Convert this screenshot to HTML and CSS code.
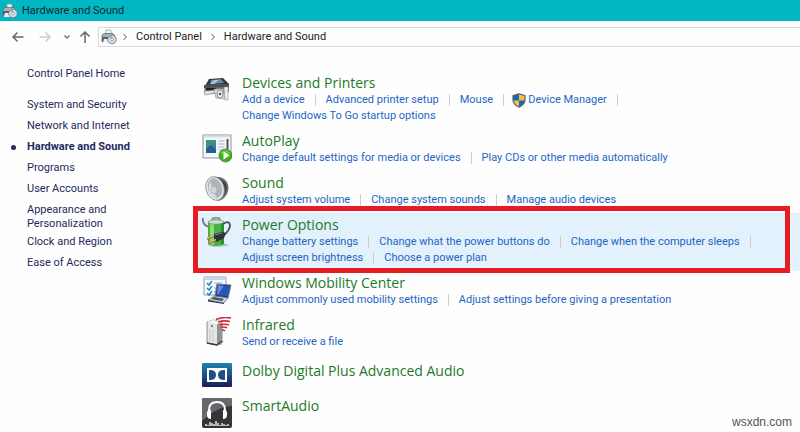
FILE: index.html
```html
<!DOCTYPE html>
<html lang="en">
<head>
  <meta charset="UTF-8">
  <title>Hardware and Sound</title>
  <link rel="stylesheet" href="styles.css">
</head>
<body>

  <!-- shared icon -->
  <svg class="defs" aria-hidden="true">
    <symbol id="hw-icon" viewBox="0 0 16 16">
      <path d="M5 1h5v5H5z" fill="#f4f8fa" stroke="#8b979e" stroke-width=".7"/>
      <path d="M1 6l2-1.500h9L14 7v6H1z" fill="#aab1b6" stroke="#596269" stroke-width=".7"/>
      <path d="M1 8h8v4H1z" fill="#596168"/>
      <path d="M3 10h5v4H2z" fill="#eef2f4"/>
      <circle cx="11" cy="10.500" r="4.300" fill="#d5dee4" stroke="#647683" stroke-width=".8"/>
      <path d="M11 10.500L8.500 7.500 11 6.500z" fill="#7fb5d6"/>
      <circle cx="11" cy="10.500" r="1.400" fill="#fff" stroke="#718693" stroke-width=".7"/>
    </symbol>
  </svg>

  <header class="title-bar">
    <svg class="small-icon"><use href="#hw-icon"/></svg>
    <h1>Hardware and Sound</h1>
  </header>

  <div class="toolbar">
    <button class="nav-button" aria-label="Back">
      <svg viewBox="0 0 12 12"><path d="M11.500 6H1M5.500 1.500L1 6l4.500 4.500"/></svg>
    </button>
    <button class="nav-button forward" aria-label="Forward" disabled>
      <svg viewBox="0 0 12 12"><path d="M.5 6H11M6.500 1.500L11 6l-4.500 4.500"/></svg>
    </button>
    <button class="nav-button recent" aria-label="Recent locations">
      <svg viewBox="0 0 12 12"><path d="M3.500 4.500L6 7l2.500-2.500"/></svg>
    </button>
    <button class="nav-button up" aria-label="Up">
      <svg viewBox="0 0 12 12"><path d="M6 12V1M1.500 5.500L6 1l4.500 4.500"/></svg>
    </button>
    <nav class="address" aria-label="Address">
      <svg class="small-icon"><use href="#hw-icon"/></svg>
      <svg class="chevron" viewBox="0 0 6 8"><path d="M1.500 1l3 3-3 3"/></svg>
      <a href="#">Control Panel</a>
      <svg class="chevron" viewBox="0 0 6 8"><path d="M1.500 1l3 3-3 3"/></svg>
      <a href="#">Hardware and Sound</a>
    </nav>
  </div>

  <div class="page">
    <nav class="sidebar">
      <a class="home" href="#">Control Panel Home</a>
      <ul>
        <li><a href="#">System and Security</a></li>
        <li><a href="#">Network and Internet</a></li>
        <li class="current"><a href="#">Hardware and Sound</a></li>
        <li><a href="#">Programs</a></li>
        <li><a href="#">User Accounts</a></li>
        <li class="two-line"><a href="#">Appearance and Personalization</a></li>
        <li><a href="#">Clock and Region</a></li>
        <li><a href="#">Ease of Access</a></li>
      </ul>
    </nav>

    <main class="categories">
      <section class="category">
        <svg class="icon" viewBox="0 0 30 30">
          <path d="M7 4l14-1 6 6-2 2H3z" fill="#30363a"/>
          <path d="M9 5l10-1 3 4-14 1z" fill="#678da5"/>
          <path d="M12 5l5 0-5 4H8z" fill="#a9c6d6"/>
          <path d="M2 10l25-1v8l-4 2H3z" fill="#777d80"/>
          <path d="M2 10l25-1v3L2 13z" fill="#4a4f52"/>
          <path d="M4 13h10v3H4z" fill="#202427"/>
          <path d="M2 16l12-1v3L3 20z" fill="#dfe2e3" stroke="#777" stroke-width=".6"/>
          <path d="M12 14h9l2 10-9-1z" fill="#d8dadb" stroke="#888" stroke-width=".6"/>
          <ellipse cx="18" cy="19" rx="3" ry="4" fill="#f4f4f4" stroke="#777" stroke-width=".8"/>
          <circle cx="18" cy="19" r="1.300" fill="#555"/>
          <path d="M22 12h4v13h-3z" fill="#eceded" stroke="#999" stroke-width=".6"/>
        </svg>
        <div class="details">
          <h2><a href="#">Devices and Printers</a></h2>
          <ul class="tasks">
            <li class="divided"><a href="#">Add a device</a></li>
            <li class="divided"><a href="#">Advanced printer setup</a></li>
            <li class="divided"><a href="#">Mouse</a></li>
            <li class="divided">
              <svg class="shield" viewBox="0 0 14 15">
                <path d="M7 .8l6 2v4q0 4.500-6 7.500-6-3-6-7.500v-4z" fill="#f6c142"/>
                <path d="M7 .8v6.700H1V2.800zM7 7.500h6q-.5 4-6 6.800z" fill="#1767b7"/>
                <path d="M7 .8l6 2v4q0 4.500-6 7.500-6-3-6-7.500v-4z" fill="none" stroke="#56616b" stroke-width="1.200"/>
              </svg>
              <a href="#">Device Manager</a>
            </li>
            <li><a href="#">Change Windows To Go startup options</a></li>
          </ul>
        </div>
      </section>

      <section class="category">
        <svg class="icon" viewBox="0 0 30 30">
          <path d="M1 2h28v23H1z" fill="#f5f6f7" stroke="#8c9498"/>
          <path d="M2 2.500h26v2H2z" fill="#d9dfe2"/>
          <path d="M4 7h10v13H4z" fill="#3c7db0"/>
          <path d="M4 7h10v4L4 15z" fill="#3f9281"/>
          <path d="M4 16l5-4 5 5v3H4z" fill="#255d93"/>
          <path d="M16.500 8h6M16.500 11h6M16.500 14h6M16.500 17h4" stroke="#a7b4ba"/>
          <path d="M25.500 6v10" stroke="#4a5358" stroke-width="2"/>
          <circle cx="23.500" cy="22.500" r="6.500" fill="#44ad22" stroke="#268710" stroke-width=".7"/>
          <path d="M18 20q5-6 11 0-4 3-11 0z" fill="#78d450" opacity=".7"/>
          <path d="M21.500 18.500l6 4-6 4z" fill="#fff"/>
        </svg>
        <div class="details">
          <h2><a href="#">AutoPlay</a></h2>
          <ul class="tasks">
            <li class="divided"><a href="#">Change default settings for media or devices</a></li>
            <li><a href="#">Play CDs or other media automatically</a></li>
          </ul>
        </div>
      </section>

      <section class="category">
        <svg class="icon" viewBox="0 0 30 30">
          <path d="M11 2q10-1 14 5 3 6 0 12-4 7-10 7z" fill="#666d71"/>
          <path d="M18 4q9 4 6 12-2 7-8 9z" fill="#3a3f42"/>
          <ellipse cx="13" cy="13.500" rx="9" ry="12" transform="rotate(-17 13 13.500)" fill="#e4e6e8" stroke="#8a9195" stroke-width=".8"/>
          <ellipse cx="13" cy="13" rx="7" ry="10" transform="rotate(-17 13 13)" fill="#aeb5b9"/>
          <path d="M8.500 6q-3 7 0 13 3 4 6 3-5-7-6-16z" fill="#dfe3e5"/>
          <ellipse cx="12" cy="15" rx="3" ry="4" fill="#cfd4d7" stroke="#969da1" stroke-width=".5"/>
        </svg>
        <div class="details">
          <h2><a href="#">Sound</a></h2>
          <ul class="tasks">
            <li class="divided"><a href="#">Adjust system volume</a></li>
            <li class="divided"><a href="#">Change system sounds</a></li>
            <li><a href="#">Manage audio devices</a></li>
          </ul>
        </div>
      </section>

      <section class="category selected">
        <svg class="icon" viewBox="0 0 30 30">
          <ellipse cx="16" cy="28" rx="10" ry="1.800" fill="#b4c4ce"/>
          <path d="M1 1q-1 7 6 9" fill="none" stroke="#6b7a83" stroke-width="1.800"/>
          <path d="M10 1q4-2 8 0v4h-8z" fill="#a8b5ad" stroke="#69756f" stroke-width=".7"/>
          <path d="M6 5q8-3 16 0v22q-8 4-16 0z" fill="#49b03f"/>
          <path d="M8 6h4v22l-4-1z" fill="#8fdb7c"/>
          <path d="M19 6l3 0v21l-3 1z" fill="#2a8f2e"/>
          <ellipse cx="14" cy="5" rx="8" ry="2.200" fill="#cfdfd2" stroke="#5f9463" stroke-width=".7"/>
          <path d="M21 7q6-4 7 1 0 5-6 10" fill="none" stroke="#46535c" stroke-width="1.800"/>
          <path d="M12 17l8-2 4 1-2 5-7 4-3-2z" fill="#2d3338"/>
          <path d="M13 18l7-2" stroke="#7c8790" fill="none"/>
          <path d="M12 19l-7 3M14 23l-7 3" stroke="#936c29" stroke-width="2.200"/>
          <path d="M12 18.500l-7 3M14 22.500l-7 3" stroke="#efd28c"/>
        </svg>
        <div class="details">
          <h2><a href="#">Power Options</a></h2>
          <ul class="tasks">
            <li class="divided"><a href="#">Change battery settings</a></li>
            <li class="divided"><a href="#">Change what the power buttons do</a></li>
            <li class="divided"><a href="#">Change when the computer sleeps</a></li>
            <li class="divided"><a href="#">Adjust screen brightness</a></li>
            <li><a href="#">Choose a power plan</a></li>
          </ul>
        </div>
      </section>

      <section class="category">
        <svg class="icon" viewBox="0 0 30 30">
          <path d="M2 2h22v18H2z" fill="#f7fafc" stroke="#919ba4"/>
          <path d="M2 2h22v3H2z" fill="#c9d7e2"/>
          <path d="M5 8l2 2 3-4M5 13l2 2 3-4M5 18l2 2 3-4" fill="none" stroke="#2785c5" stroke-width="1.500"/>
          <path d="M12 8h8M12 13h4M12 17h3" stroke="#9cafbc"/>
          <path d="M15 9l14 1-3 13-13-2z" fill="#1c3b8d" stroke="#6d7e93"/>
          <path d="M16 10l6 1-6 9-1-1z" fill="#608bde"/>
          <path d="M22 11l6 0-2 10-10-1z" fill="#2856b8"/>
          <path d="M12 21l14 2-4 5-16-3z" fill="#cfd6dc" stroke="#57636d" stroke-width=".7"/>
          <path d="M12 22l10 2-2 2-11-2z" fill="#46525d"/>
          <path d="M6 25l16 3v1L6 26.500z" fill="#303a42"/>
        </svg>
        <div class="details">
          <h2><a href="#">Windows Mobility Center</a></h2>
          <ul class="tasks">
            <li class="divided"><a href="#">Adjust commonly used mobility settings</a></li>
            <li><a href="#">Adjust settings before giving a presentation</a></li>
          </ul>
        </div>
      </section>

      <section class="category">
        <svg class="icon" viewBox="0 0 30 30">
          <path d="M8 25l14-1-3 4H9z" fill="#b0b0b0"/>
          <path d="M5 5l6-2 9 2v19l-5 4-10-2z" fill="#e4e6e7" stroke="#74797c" stroke-width=".8"/>
          <path d="M15 7l5-2v19l-5 4z" fill="#8f9497"/>
          <path d="M5 5l6-2 9 2-5 2z" fill="#f9f9f9"/>
          <path d="M8 12v12M11 13v12" stroke="#c3c7c9"/>
          <circle cx="10" cy="9" r="1.200" fill="#55a543"/>
          <path d="M5 26l10 2 5-4" fill="none" stroke="#35393b" stroke-width="1.300"/>
          <g fill="none" stroke="#cf2c3b" stroke-width="1.600">
            <path d="M14 2.500q7-3 15-1.500"/>
            <path d="M16 5q6-2 12-.5"/>
            <path d="M18 7.700q4-1 9 0"/>
            <path d="M19 10.400q3-1 6 .4"/>
            <path d="M20 13q2 0 3 1"/>
          </g>
        </svg>
        <div class="details">
          <h2><a href="#">Infrared</a></h2>
          <ul class="tasks">
            <li><a href="#">Send or receive a file</a></li>
          </ul>
        </div>
      </section>

      <section class="category single">
        <svg class="icon wide" viewBox="0 0 30 24">
          <defs>
            <linearGradient id="dolby" x2="0" y2="1">
              <stop stop-color="#1e81b1"/>
              <stop offset="1" stop-color="#1c1c58"/>
            </linearGradient>
          </defs>
          <rect width="30" height="24" rx="1" fill="url(#dolby)"/>
          <path d="M5 5h20v14H5z" fill="#fff"/>
          <path d="M7 7h1q6 0 6 5t-6 5H7zM23 7h-1q-6 0-6 5t6 5h1z" fill="#224f83"/>
        </svg>
        <div class="details">
          <h2><a href="#">Dolby Digital Plus Advanced Audio</a></h2>
        </div>
      </section>

      <section class="category single">
        <svg class="icon" viewBox="0 0 30 30">
          <rect width="30" height="30" rx="2" fill="#343538"/>
          <path d="M0 2q0-2 2-2h26q2 0 2 2v6Q16 8 0 23z" fill="#66686b"/>
          <path d="M7 16V12q0-8 8-8t8 8v4" fill="none" stroke="#fff" stroke-width="2"/>
          <path d="M5 14q1-3 4-2v9q-4 0-4-4zM25 14q-1-3-4-2v9q4 0 4-4z" fill="#fff"/>
          <path d="M4 28v-2M6 28v-1M8 28v-4M10 28v-3M12 28v-2M14 28v-5M16 28v-3M18 28v-1M20 28v-3M22 28v-2M24 28v-1M26 28v-2" stroke="#fff" stroke-width="1.300"/>
        </svg>
        <div class="details">
          <h2><a href="#">SmartAudio</a></h2>
        </div>
      </section>
    </main>
  </div>

  <div class="watermark">wsxdn.com</div>

</body>
</html>
```

FILE: styles.css
```css
* { margin: 0; padding: 0; box-sizing: border-box; }

body {
  font-family: Roboto, "Open Sans", sans-serif;
  font-size: 11px;
  line-height: 16px;
  color: #222;
  background-color: #fefefe;
  overflow: hidden;
}

a { color: inherit; text-decoration: none; }
a:hover { text-decoration: underline; }
ul { list-style: none; }
svg { display: block; flex: none; }
.defs { width: 0; height: 0; position: absolute; }

.small-icon {
  width: 16px;
  height: 16px;
}

/* title bar */
.title-bar {
  display: flex;
  align-items: center;
  gap: 4px;
  height: 21px;
  padding: 0 2px;
  background-color: #00b7c3;
}

.title-bar h1 {
  font-size: 11px;
  font-weight: normal;
  color: #10272b;
}

/* navigation and address */
.toolbar {
  display: flex;
  align-items: center;
  padding: 6px 0 6px 8px;
}

.nav-button {
  display: flex;
  justify-content: center;
  width: 20px;
  border: none;
  background: none;
  color: #666;
}

.nav-button svg {
  width: 12px;
  height: 12px;
  fill: none;
  stroke: currentColor;
  stroke-width: 1.5;
}

.forward { width: 34px; color: #ccc; }
.recent { width: 10px; color: #777; }
.up { width: 26px; }

.address {
  flex: 1;
  display: flex;
  align-items: center;
  height: 20px;
  padding-left: 2px;
  border: 1px solid #d9d9d9;
  border-right: none;
}

.address a { margin: 0 8px; }

.chevron {
  width: 6px;
  height: 8px;
  margin-left: 5px;
  fill: none;
  stroke: #555;
}

.address a + .chevron { margin-left: 0; }

.page {
  display: flex;
  padding-top: 14px;
}

/* left links */
.sidebar {
  flex: none;
  width: 193px;
  padding: 0 50px 0 27px;
  line-height: 14px;
  color: #1e2a5c;
}

.home {
  display: block;
  margin-bottom: 17px;
}

.sidebar li { padding-bottom: 7px; }
.sidebar .two-line { padding-bottom: 4px; }

.current {
  position: relative;
  font-weight: bold;
  white-space: nowrap;
}

.current::before {
  content: "";
  position: absolute;
  top: 5px;
  left: -16px;
  width: 5px;
  height: 5px;
  border-radius: 50%;
  background-color: #1e2a5c;
}

/* categories */
.categories {
  flex: 1;
  padding-top: 4px;
}

.category {
  display: flex;
  gap: 10px;
  padding: 2px 0 5px 9px;
}

.icon {
  width: 30px;
  height: 30px;
  margin-top: 2px;
}

.icon.wide { height: 24px; }

.details { flex: 1; }

.category h2 {
  font-family: "Open Sans", "Noto Sans", sans-serif;
  font-size: 14px;
  font-weight: normal;
  line-height: 19px;
  color: #1c7a28;
}

.tasks {
  display: flex;
  flex-wrap: wrap;
  color: #1c66c4;
}

.tasks li {
  display: flex;
  align-items: center;
  height: 16px;
}

.divided::after {
  content: "";
  width: 1px;
  height: 12px;
  margin: 0 10px;
  background-color: #ccc;
}

.shield {
  width: 14px;
  height: 15px;
  margin: 0 2px 0 -2px;
}

.single { padding: 6px 0 3px 9px; }

.selected {
  position: relative;
  background-color: #e3f1fc;
}

/* red frame round the selected category */
.selected::after {
  content: "";
  position: absolute;
  top: -7px;
  right: 10px;
  bottom: -2px;
  left: 0;
  border: 5px solid #e51c23;
}

.watermark {
  position: absolute;
  right: 8px;
  bottom: 2px;
  font-family: "Liberation Sans", Arial, sans-serif;
  font-size: 12px;
  color: #555;
}
```
